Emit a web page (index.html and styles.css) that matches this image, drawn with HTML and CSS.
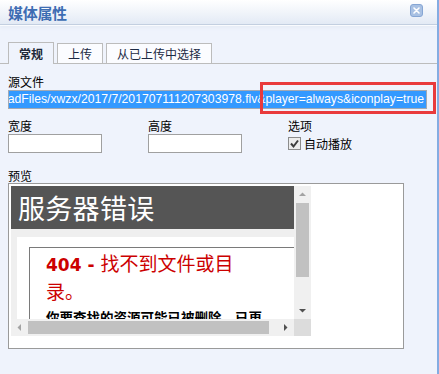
FILE: index.html
```html
<!DOCTYPE html>
<html lang="zh-CN">
<head>
    <meta charset="UTF-8">
    <title>媒体属性</title>
    <link rel="stylesheet" href="styles.css">
</head>
<body>
    <div class="dialog">
        <div class="titlebar">
            <span class="title">媒体属性</span>
            <span class="close">
                <svg width="13" height="13" viewBox="0 0 13 13">
                    <rect x="0.5" y="0.5" width="12" height="12" rx="2.5" fill="#a9c1e3" stroke="#86a6d4"/>
                    <path d="M4 4 L9 9 M9 4 L4 9" stroke="#fff" stroke-width="1.6" stroke-linecap="round"/>
                </svg>
            </span>
        </div>
        <div class="content">
            <div class="tabs">
                <span class="tab active">常规</span>
                <span class="tab">上传</span>
                <span class="tab">从已上传中选择</span>
            </div>
            <div class="form">
                <div class="label">源文件</div>
                <div class="url-box">
                    <span class="url-sel">/UploadFiles/xwzx/2017/7/201707111207303978.flv&amp;player=always&amp;iconplay=true</span>
                </div>
                <div class="annot"></div>
                <div class="row">
                    <div class="col">
                        <div class="label">宽度</div>
                        <div class="text-input"></div>
                    </div>
                    <div class="col">
                        <div class="label">高度</div>
                        <div class="text-input"></div>
                    </div>
                    <div class="col">
                        <div class="label">选项</div>
                        <div class="check">
                            <svg width="13" height="13" viewBox="0 0 13 13">
                                <rect x="0.5" y="0.5" width="12" height="12" fill="#ececec" stroke="#8c8c8c"/>
                                <path d="M3 6.5 L5.5 9.5 L10 3.5" fill="none" stroke="#3c3c3c" stroke-width="2"/>
                            </svg>
                            <span>自动播放</span>
                        </div>
                    </div>
                </div>
                <div class="label preview-label">预览</div>
                <div class="preview">
                    <div class="frame">
                        <div class="viewport">
                            <div class="err-head">服务器错误</div>
                            <div class="err-body">
                                <div class="err-box">
                                    <div class="err-frame">
                                        <h2><b>404 - </b>找不到文件或目录。</h2>
                                        <h3>你要查找的资源可能已被删除，已更改名称或者暂时不可用。</h3>
                                    </div>
                                </div>
                            </div>
                        </div>
                        <div class="vscroll">
                            <svg width="17" height="17" viewBox="0 0 17 17"><path d="M5 10 L12 10 L8.5 6.5 Z" fill="#a3a3a3"/></svg>
                            <div class="vtrack"><div class="vthumb"></div></div>
                            <svg width="17" height="17" viewBox="0 0 17 17"><path d="M5 7 L12 7 L8.5 10.5 Z" fill="#505050"/></svg>
                        </div>
                        <div class="hscroll">
                            <svg width="17" height="17" viewBox="0 0 17 17"><path d="M10 5 L10 12 L6.5 8.5 Z" fill="#a3a3a3"/></svg>
                            <div class="htrack"><div class="hthumb"></div></div>
                            <svg width="17" height="17" viewBox="0 0 17 17"><path d="M7 5 L7 12 L10.5 8.5 Z" fill="#505050"/></svg>
                        </div>
                        <div class="corner"></div>
                    </div>
                </div>
            </div>
        </div>
    </div>
</body>
</html>
```

FILE: styles.css
```css
body {
    margin: 0;
    padding: 0;
    font-family: "Liberation Sans", "Noto Sans CJK SC", sans-serif;
    font-size: 12px;
    color: #000;
}

.dialog {
    position: relative;
    width: 437px;
    height: 374px;
    background-color: #eff3fc;
    border-right: 2px solid #84ace2;
    overflow: hidden;
}

.titlebar {
    height: 24px;
    display: flex;
    align-items: center;
    justify-content: space-between;
    padding: 0 14px 0 8px;
    background: linear-gradient(#ffffff, #e3eaf5);
    border-bottom: 1px solid #c3cfe0;
    box-shadow: 0 1px 0 #f9fbfe, 0 3px 3px #e6ecf6;
}

.title {
    font-family: "Noto Sans CJK SC", sans-serif;
    font-size: 15px;
    font-weight: bold;
    color: #3d6db3;
    letter-spacing: -0.3px;
}

.close {
    display: flex;
    margin-top: -4px;
}

/* tabs */
.tabs {
    display: flex;
    align-items: flex-end;
    gap: 3px;
    height: 21px;
    margin-top: 17px;
    padding-left: 8px;
    border-bottom: 1px solid #bcbcbc;
}

.tab {
    height: 19px;
    line-height: 19px;
    padding: 0 10px;
    border: 1px solid #bcbcbc;
    border-bottom: none;
    background-color: #fbfcff;
    font-family: "Noto Sans CJK SC", sans-serif;
    font-size: 12px;
    color: #1c2a44;
}

.tab.active {
    height: 21px;
    line-height: 21px;
    margin-bottom: -1px;
    background-color: #eff3fc;
    font-weight: bold;
    color: #202838;
}

/* form */
.form {
    padding: 10px 8px 0 8px;
}

.label {
    font-family: "Noto Sans CJK SC", sans-serif;
    font-size: 12px;
    line-height: 16px;
}

.url-box {
    width: 417px;
    height: 17px;
    border: 1px solid #a3a9b3;
    background-color: #fff;
    display: flex;
    justify-content: flex-end;
    overflow: hidden;
}

.url-sel {
    white-space: nowrap;
    background-color: #3399ff;
    color: #fff;
    font-family: "Liberation Sans", sans-serif;
    font-size: 12.2px;
    line-height: 17px;
    padding-right: 2px;
}

.annot {
    position: absolute;
    left: 260px;
    top: 82px;
    width: 170px;
    height: 26px;
    border: 3px solid #e93a3c;
}

.row {
    display: flex;
    margin-top: 9px;
}

.col {
    width: 140px;
}

.text-input {
    width: 92px;
    height: 17px;
    border: 1px solid #a0a0a0;
    background-color: #fff;
}

.check {
    display: flex;
    align-items: center;
    gap: 3px;
    margin-top: 1px;
    font-family: "Noto Sans CJK SC", sans-serif;
    font-size: 12px;
}

.check svg {
    display: block;
}

.preview-label {
    margin-top: 16px;
    line-height: 14px;
}

/* preview box */
.preview {
    width: 390px;
    height: 160px;
    border: 1px solid #9a9a9a;
    background-color: #fff;
    padding: 2px;
}

.frame {
    width: 300px;
    height: 150px;
    display: grid;
    grid-template-columns: 283px 17px;
    grid-template-rows: 133px 17px;
}

.viewport {
    overflow: hidden;
    background-color: #efefef;
}

.err-head {
    height: 43px;
    background-color: #555555;
    color: #fff;
    font-family: "Noto Sans CJK SC", sans-serif;
    font-size: 27px;
    line-height: 43px;
    padding-left: 7px;
    letter-spacing: 0.3px;
}

.err-body {
    padding: 8px 0 0 6px;
}

.err-box {
    width: 280px;
    background-color: #fff;
    padding: 10px 0 0 12px;
    height: 200px;
}

.err-frame {
    width: 260px;
    height: 150px;
    border: 1px solid #7a7a7a;
    padding: 2px 0 0 16px;
}

.err-frame h2,
.err-frame h3 {
    margin: 0;
}

.err-frame h2 {
    width: 205px;
    font-family: "Noto Sans CJK SC", sans-serif;
    font-size: 19px;
    font-weight: normal;
    line-height: 25px;
    color: #cc0000;
}

.err-frame h2 b {
    font-family: "DejaVu Sans", sans-serif;
    font-size: 17px;
}

.err-frame h3 {
    width: 225px;
    margin-top: 5px;
    font-family: "Noto Sans CJK SC", sans-serif;
    font-size: 13.5px;
    line-height: 18px;
}

.vscroll {
    display: flex;
    flex-direction: column;
    background-color: #f0f0f0;
}

.vtrack {
    flex: 1;
    padding: 0 2px;
}

.vthumb {
    height: 74px;
    background-color: #c1c1c1;
}

.hscroll {
    display: flex;
    background-color: #f0f0f0;
}

.htrack {
    flex: 1;
    padding: 2px 0;
}

.hthumb {
    width: 241px;
    height: 13px;
    background-color: #c1c1c1;
}

.corner {
    background-color: #dcdcdc;
}
```
